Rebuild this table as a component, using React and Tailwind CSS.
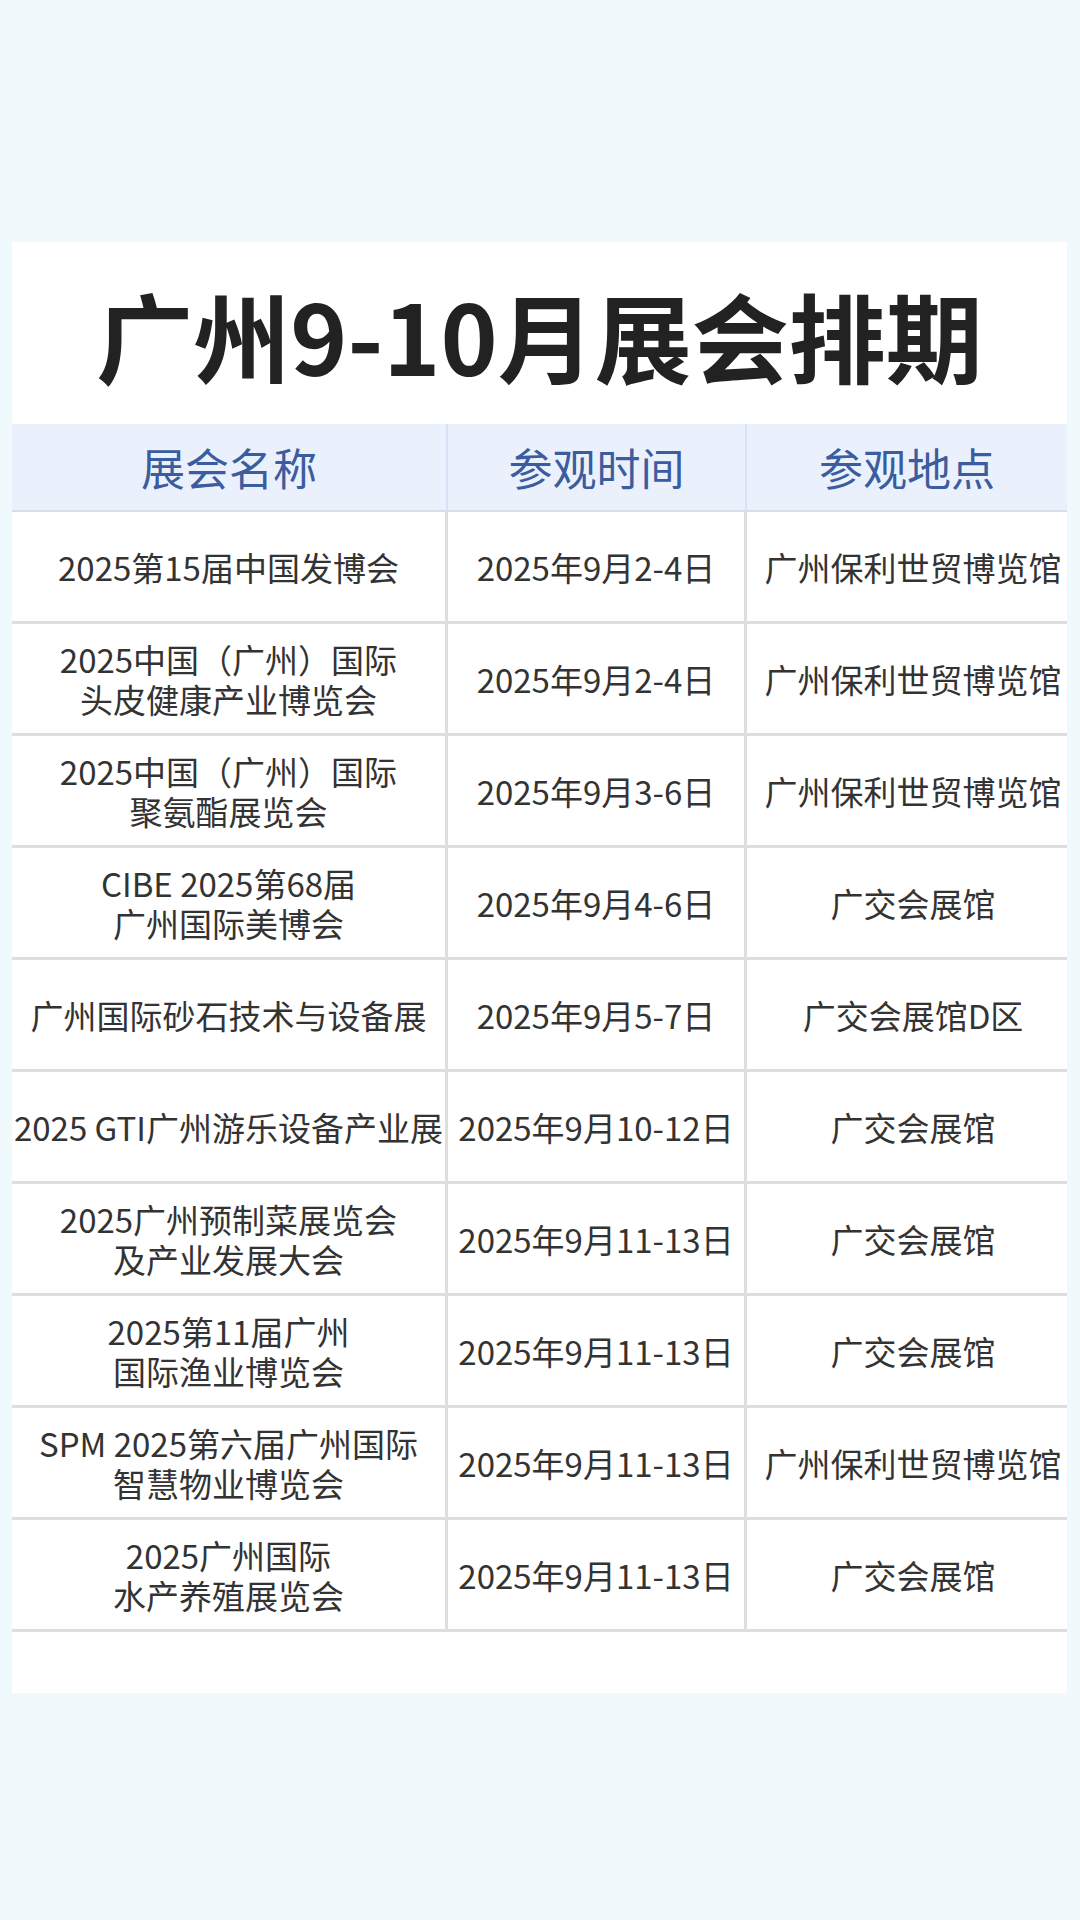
import React from "react";

const rows = [
  { name: ["2025第15届中国发博会"], time: "2025年9月2-4日", place: "广州保利世贸博览馆" },
  { name: ["2025中国（广州）国际", "头皮健康产业博览会"], time: "2025年9月2-4日", place: "广州保利世贸博览馆" },
  { name: ["2025中国（广州）国际", "聚氨酯展览会"], time: "2025年9月3-6日", place: "广州保利世贸博览馆" },
  { name: ["CIBE 2025第68届", "广州国际美博会"], time: "2025年9月4-6日", place: "广交会展馆" },
  { name: ["广州国际砂石技术与设备展"], time: "2025年9月5-7日", place: "广交会展馆D区" },
  { name: ["2025 GTI广州游乐设备产业展"], time: "2025年9月10-12日", place: "广交会展馆" },
  { name: ["2025广州预制菜展览会", "及产业发展大会"], time: "2025年9月11-13日", place: "广交会展馆" },
  { name: ["2025第11届广州", "国际渔业博览会"], time: "2025年9月11-13日", place: "广交会展馆" },
  { name: ["SPM 2025第六届广州国际", "智慧物业博览会"], time: "2025年9月11-13日", place: "广州保利世贸博览馆" },
  { name: ["2025广州国际", "水产养殖展览会"], time: "2025年9月11-13日", place: "广交会展馆" },
];

const font = { fontFamily: '"Noto Sans CJK SC", "Noto Sans", sans-serif' };

function App() {
  return (
    <div className="min-h-[1920px] bg-[#f0fafc] pt-[242px] pl-[12px] pr-[13px]" style={font}>
      <div className="bg-white h-[1451px] overflow-hidden">
        {/* title */}
        <div className="h-[182px] flex items-center justify-center">
          <h1 className="text-[97px] font-bold text-[#222] leading-none">广州9-10月展会排期</h1>
        </div>

        {/* table header */}
        <div className="grid grid-cols-[436px_299px_320px] h-[88px] bg-[#eaf1fd] border-b-2 border-[#dadfe6] text-[44px] text-[#3b5c9e]">
          <div className="flex items-center justify-center border-r-2 border-[#d6e2f6]">展会名称</div>
          <div className="flex items-center justify-center border-r-2 border-[#d6e2f6]">参观时间</div>
          <div className="flex items-center justify-center">参观地点</div>
        </div>

        {/* table body */}
        {rows.map((r, i) => (
          <div
            key={i}
            className="grid grid-cols-[436px_299px_320px] h-[112px] border-b-[3px] border-[#dedede] text-[33px] leading-[40px] text-[#333]"
          >
            <div className="flex flex-col items-center justify-center border-r-[3px] border-[#dedede] whitespace-nowrap">
              {r.name.map((line, j) => (
                <div key={j} className="h-[40px] leading-[40px]">
                  {line}
                </div>
              ))}
            </div>
            <div className="flex items-center justify-center border-r-[3px] border-[#dedede] whitespace-nowrap">
              {r.time}
            </div>
            <div className="flex items-center justify-center whitespace-nowrap pl-[12px]">{r.place}</div>
          </div>
        ))}
      </div>
    </div>
  );
}

export default App;
